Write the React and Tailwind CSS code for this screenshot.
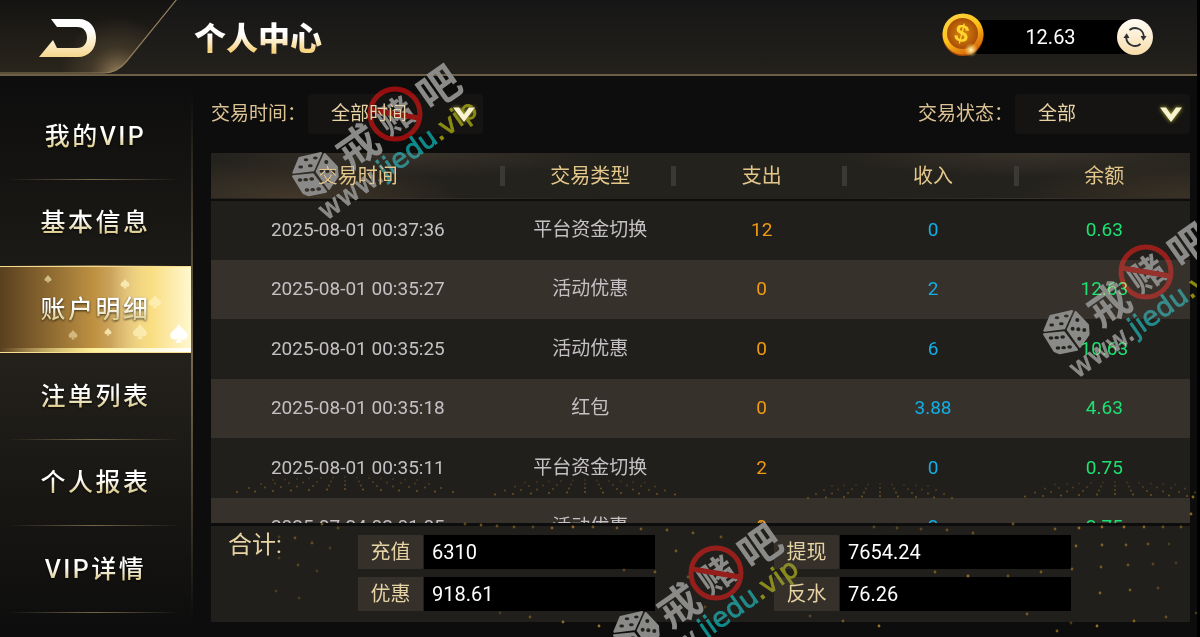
import { useState } from "react";
import { BsSuitSpadeFill } from "react-icons/bs";

const menu = ["我的VIP", "基本信息", "账户明细", "注单列表", "个人报表", "VIP详情"];

const rows = [
  { time: "2025-08-01 00:37:36", type: "平台资金切换", out: "12", income: "0", balance: "0.63" },
  { time: "2025-08-01 00:35:27", type: "活动优惠", out: "0", income: "2", balance: "12.63" },
  { time: "2025-08-01 00:35:25", type: "活动优惠", out: "0", income: "6", balance: "10.63" },
  { time: "2025-08-01 00:35:18", type: "红包", out: "0", income: "3.88", balance: "4.63" },
  { time: "2025-08-01 00:35:11", type: "平台资金切换", out: "2", income: "0", balance: "0.75" },
  { time: "2025-07-24 02:01:05", type: "活动优惠", out: "0", income: "2", balance: "2.75" },
];

function BackPanel() {
  return (
    <svg className="h-full w-full" viewBox="0 0 180 76" aria-hidden="true">
      <defs>
        <linearGradient id="panel" x1="0" y1="0" x2="0" y2="1">
          <stop offset="0" stopColor="#141312" />
          <stop offset="1" stopColor="#2a251c" />
        </linearGradient>
        <radialGradient id="panelGlow" cx="118" cy="76" r="58" gradientUnits="userSpaceOnUse">
          <stop offset="0" stopColor="#b09468" stopOpacity="0.85" />
          <stop offset="0.5" stopColor="#6b5a3e" stopOpacity="0.35" />
          <stop offset="1" stopColor="#6b5a3e" stopOpacity="0" />
        </radialGradient>
        <linearGradient id="arrow" x1="0" y1="0" x2="0" y2="1">
          <stop offset="0.3" stopColor="#ffffff" />
          <stop offset="1" stopColor="#f7d68c" />
        </linearGradient>
      </defs>
      <path d="M0 0H177L126 63Q117 74 103 74H0Z" fill="url(#panel)" />
      <path d="M0 0H177L126 63Q117 74 103 74H0Z" fill="url(#panelGlow)" />
      <path d="M177 0L126 63Q117 74 103 74H0" fill="none" stroke="#8f7c5a" strokeWidth="1.2" />
      <path
        d="M51 20H79C89 20 96 28 96 38.500C96 50 89 58 78 58H39L53 41L57 49H77C84 49 87 44 87 38.500C87 33 84 28 77 28H57Z"
        fill="url(#arrow)"
      />
    </svg>
  );
}

function Coin() {
  return (
    <svg className="relative mb-1 h-[44px] w-[42px] shrink-0" viewBox="0 0 42 44" aria-hidden="true">
      <defs>
        <linearGradient id="rim" x1="0" y1="0" x2="0.6" y2="1">
          <stop offset="0" stopColor="#ffd84a" />
          <stop offset="0.55" stopColor="#fcc419" />
          <stop offset="1" stopColor="#d9680b" />
        </linearGradient>
        <radialGradient id="face">
          <stop offset="0" stopColor="#d98a12" />
          <stop offset="1" stopColor="#a94e06" />
        </radialGradient>
        <radialGradient id="shine">
          <stop offset="0" stopColor="#fff8d0" />
          <stop offset="1" stopColor="#ffd84a" stopOpacity="0" />
        </radialGradient>
      </defs>
      <circle cx="21" cy="22.500" r="20.500" fill="#a8480a" />
      <circle cx="21" cy="21" r="20.500" fill="url(#rim)" />
      <circle cx="20.500" cy="20.500" r="15.500" fill="url(#face)" />
      <text
        x="20"
        y="29"
        textAnchor="middle"
        fontFamily="Liberation Sans, sans-serif"
        fontSize="25"
        fontWeight="700"
        fill="#ffd52e"
        transform="rotate(14 20 20)"
      >
        $
      </text>
      <circle cx="29" cy="37" r="7" fill="url(#shine)" />
    </svg>
  );
}

function RefreshIcon() {
  return (
    <svg className="h-[24px] w-[24px]" viewBox="0 0 26 26" aria-hidden="true">
      <g fill="none" stroke="#2a3033" strokeWidth="2">
        <path d="M7 5.500A9.500 9.500 0 0 1 22.500 12" />
        <path d="M19 20.500A9.500 9.500 0 0 1 3.500 14" />
      </g>
      <path d="M19 12H25.500L22 17Z" fill="#2a3033" />
      <path d="M0.500 14H7L4 9Z" fill="#2a3033" />
    </svg>
  );
}

function Arrow() {
  return (
    <svg
      className="pointer-events-none absolute top-3 right-[7px] h-[17px] w-[24px] drop-shadow-[0_0_2px_#c6c234]"
      viewBox="0 0 24 17"
      aria-hidden="true"
    >
      <path d="M1 1.500H7L12 8.500L17 1.500H23L12 16Z" fill="#f8f4d2" />
    </svg>
  );
}

function Filter({ id, label, options }) {
  const [value, setValue] = useState(options[0]);
  return (
    <div className="flex items-center gap-0.5">
      <label htmlFor={id} className="text-[19px] text-[#dcc394]">
        {label}：
      </label>
      <div className="relative h-10 w-[175px] rounded bg-[#151412]">
        <select
          id={id}
          value={value}
          onChange={(e) => setValue(e.target.value)}
          className="h-full w-full appearance-none bg-transparent pl-[23px] text-[19px] text-[#e8d3a6]"
        >
          {options.map((o) => (
            <option key={o}>{o}</option>
          ))}
        </select>
        <Arrow />
      </div>
    </div>
  );
}

function Total({ id, label, value }) {
  return (
    <div className="flex h-[34px] w-[297px] gap-px">
      <label
        htmlFor={id}
        className="flex w-[65px] items-center justify-center bg-[#35302a] text-[20px] text-[#e6d3a4]"
      >
        {label}
      </label>
      <input id={id} readOnly value={value} className="min-w-0 flex-1 bg-black px-2 text-[20px] text-white" />
    </div>
  );
}

// gold dust: [x, y, strength]
const dust = [
  [279, 537, 3], [295, 538, 5], [312, 543, 5], [330, 548, 3], [279, 558, 3], [298, 565, 4],
  [317, 571, 3], [276, 591, 3], [299, 598, 3], [322, 524, 6], [338, 528, 4], [465, 524, 5],
  [481, 525, 6], [497, 526, 5], [514, 527, 5], [533, 527, 4], [552, 528, 7], [573, 527, 8],
  [593, 527, 6], [617, 528, 6], [641, 529, 6], [667, 530, 6], [693, 533, 6], [721, 537, 5],
  [676, 551, 6], [624, 570, 4], [655, 572, 6], [688, 577, 5], [705, 607, 4], [761, 522, 9],
  [599, 626, 9], [563, 622, 8], [530, 617, 5], [500, 613, 3], [810, 616, 4], [843, 621, 6],
  [874, 527, 4], [897, 528, 4], [921, 529, 4], [947, 530, 5], [973, 533, 5], [1013, 524, 6],
  [1055, 529, 6], [1079, 528, 8], [1102, 527, 8], [1124, 527, 8], [1144, 527, 7], [1163, 527, 5],
  [1181, 527, 5], [1076, 546, 7], [1102, 545, 7], [1126, 545, 6], [1148, 544, 5], [1169, 544, 3],
  [1072, 569, 6], [1101, 567, 6], [1128, 565, 5], [1153, 564, 4], [1176, 563, 3], [935, 572, 6],
  [968, 576, 8], [1008, 576, 5], [1041, 572, 6], [1100, 593, 7], [1130, 590, 6], [1158, 588, 4],
  [1027, 614, 6], [1071, 623, 4], [1134, 621, 7], [1166, 617, 5], [1097, 626, 9], [1057, 631, 7],
  [879, 626, 9], [1193, 497, 8], [1191, 514, 8], [1196, 613, 4],
];

// fan-shaped bursts above the totals: centre x, top y, dots per ring, gap
const fans = [
  [345, 477, 13, 12],
  [585, 480, 11, 12],
  [880, 484, 9, 12],
  [1115, 482, 11, 12],
];

function Dust() {
  return (
    <svg
      className="pointer-events-none absolute bottom-0 left-0 h-[180px] w-[1200px]"
      viewBox="0 457 1200 180"
      aria-hidden="true"
    >
      {fans.map(([cx, top, n, gap]) =>
        [0, 1, 2, 3].map((ring) =>
          Array.from({ length: n }, (_, i) => {
            const k = i - (n - 1) / 2;
            return (
              <circle
                key={`${cx}-${ring}-${i}`}
                cx={cx + k * (gap + ring * 2)}
                cy={top + ring * 4 + Math.abs(k) / 2}
                r="1.100"
                fill="#c08a28"
                opacity={0.18 + ring * 0.09}
              />
            );
          })
        )
      )}
      {dust.map(([x, y, s]) => (
        <circle key={`${x}-${y}`} cx={x} cy={y} r="1.400" fill="#c9922e" opacity={s / 12} />
      ))}
    </svg>
  );
}

function Watermark({ className }) {
  return (
    <svg
      className={`pointer-events-none absolute h-[180px] w-[200px] mix-blend-lighten ${className}`}
      viewBox="0 0 200 180"
      aria-hidden="true"
    >
      <g transform="translate(24 120) scale(0.333) translate(-195 -393)">
        <g fill="#8a8a88" stroke="#8a8a88" strokeWidth="6" strokeLinejoin="round">
          <path d="M148 345L213 330L190 382L130 389Z" />
          <path d="M224 333L261 372L263 400L237 438L200 386Z" />
          <path d="M129 400L189 394L228 446L176 457L160 450Z" />
        </g>
        <g fill="#25231f">
          <ellipse cx="168" cy="350" rx="7" ry="4.500" />
          <ellipse cx="196" cy="345" rx="7" ry="4.500" />
          <ellipse cx="152" cy="372" rx="7" ry="4.500" />
          <ellipse cx="181" cy="368" rx="7" ry="4.500" />
          <circle cx="229" cy="357" r="6" />
          <circle cx="215" cy="383" r="6" />
          <circle cx="232" cy="385" r="6" />
          <circle cx="250" cy="387" r="6" />
          <circle cx="235" cy="413" r="6" />
          <ellipse cx="150" cy="411" rx="7" ry="5" />
          <ellipse cx="167" cy="410" rx="7" ry="5" />
          <ellipse cx="185" cy="408" rx="7" ry="5" />
          <ellipse cx="171" cy="441" rx="7" ry="5" />
          <ellipse cx="188" cy="440" rx="7" ry="5" />
          <ellipse cx="206" cy="438" rx="7" ry="5" />
        </g>
      </g>
      <g
        fontFamily="Noto Sans CJK SC, sans-serif"
        fontWeight="700"
        fill="#8a8a88"
        textAnchor="middle"
      >
        <text transform="translate(67 93) rotate(-35)" y="15" fontSize="42">戒</text>
        <text transform="translate(105 62) rotate(-35)" y="13" fontSize="36">赌</text>
        <text transform="translate(148 34) rotate(-35)" y="15" fontSize="42">吧</text>
      </g>
      <g fill="none" stroke="#960c0d" strokeWidth="5">
        <circle cx="104" cy="60" r="25" />
        <path d="M80 56L128 64" />
      </g>
      <text
        transform="translate(35 167) rotate(-35)"
        fontFamily="DejaVu Sans, sans-serif"
        fontSize="27"
        strokeWidth="0.8"
      >
        <tspan fill="#8a8a88" stroke="#8a8a88">www.</tspan>
        <tspan fill="#0a8c8c" stroke="#0a8c8c">jiedu</tspan>
        <tspan fill="#8c8c0a" stroke="#8c8c0a">.vip</tspan>
      </text>
    </svg>
  );
}

function MenuItem({ label, active, onClick }) {
  return (
    <li className="relative flex-1">
      <button
        onClick={onClick}
        className={
          active
            ? "relative h-full w-[191px] border-y border-[#f6dc8c] bg-linear-to-r from-[#5a401f] via-[#c09343] via-50% to-[#fff8cf] text-[25px] font-medium tracking-widest"
            : "h-full w-[191px] text-[25px] font-medium tracking-widest"
        }
      >
        {active && (
          <span className="text-[#fff3c0]">
            <span className="absolute inset-y-0 right-0 w-20 bg-linear-to-r from-transparent via-[#f9dd80] to-[#fff8cf]" />
            <span className="absolute inset-x-0 bottom-0 h-1 bg-linear-to-r from-transparent via-[#fff19a] to-white" />
            <BsSuitSpadeFill className="absolute top-2 left-11 h-2 w-2 opacity-60" />
            <BsSuitSpadeFill className="absolute top-3 left-30 h-2.5 w-2.5 opacity-80" />
            <BsSuitSpadeFill className="absolute top-7 left-37 h-3.5 w-3.5 opacity-70" />
            <BsSuitSpadeFill className="absolute bottom-3 left-17 h-2.5 w-2.5 opacity-50" />
            <BsSuitSpadeFill className="absolute bottom-4 left-26 h-2 w-2 opacity-80" />
            <BsSuitSpadeFill className="absolute bottom-3 left-33 h-4 w-4 opacity-70" />
            <BsSuitSpadeFill className="absolute right-0.5 bottom-2 h-5 w-5 text-white" />
          </span>
        )}
        <span className="relative bg-linear-to-b from-white from-40% to-[#dccb8c] to-85% bg-clip-text text-transparent drop-shadow-[0_1px_1px_rgba(0,0,0,0.7)]">
          {label}
        </span>
      </button>
      {!active && (
        <span className="absolute bottom-0 left-2 h-px w-[172px] bg-linear-to-r from-transparent via-[#75684a] to-transparent" />
      )}
    </li>
  );
}

export default function App() {
  const [current, setCurrent] = useState(2);

  return (
    <div className="relative flex h-screen flex-col overflow-hidden border-r-[3px] border-black bg-[#0d0d0d] font-[Roboto,'Noto_Sans_CJK_SC',sans-serif]">
      <header className="flex h-[76px] shrink-0 items-center border-b-2 border-[#6d5f45] bg-linear-to-b from-[#161616] to-[#24211c]">
        <button aria-label="返回" className="h-[76px] w-[180px] shrink-0">
          <BackPanel />
        </button>
        <h1 className="ml-[14px] pt-1 bg-linear-to-b from-white from-45% to-[#f8d580] to-75% bg-clip-text text-[32px] font-black text-transparent">
          个人中心
        </h1>
        <div className="mr-11 ml-auto flex w-[211px] items-center">
          <Coin />
          <div className="-mx-3 h-[34px] flex-1 bg-black text-center text-[20px] leading-[34px] text-white">
            12.63
          </div>
          <button
            aria-label="刷新"
            className="relative flex h-9 w-9 shrink-0 items-center justify-center rounded-full bg-linear-to-b from-[#fffdf6] to-[#f9dcaa]"
          >
            <RefreshIcon />
          </button>
        </div>
      </header>

      <div className="flex min-h-0 flex-1">
        <nav className="relative w-[193px] shrink-0 bg-linear-to-b from-[#0d0d0d] via-[#24211b] to-[#0d0d0d]">
          <ul className="flex h-full flex-col pt-[17px] pb-6">
            {menu.map((m, i) => (
              <MenuItem key={m} label={m} active={i === current} onClick={() => setCurrent(i)} />
            ))}
          </ul>
          <span className="absolute inset-y-5 right-0 w-0.5 bg-linear-to-b from-transparent via-[#75684a] to-transparent" />
        </nav>

        <main className="flex min-w-0 flex-1 flex-col pt-[18px] pr-[7px] pb-[15px] pl-[18px]">
          <div className="flex justify-between">
            <Filter id="time" label="交易时间" options={["全部时间", "今天", "昨天"]} />
            <Filter id="status" label="交易状态" options={["全部", "支出", "收入"]} />
          </div>

          <div className="mt-[19px] min-h-0 flex-1 overflow-hidden">
            <table className="w-full table-fixed border-collapse text-center text-[19px]">
              <thead>
                <tr className="h-[47px] border-b-2 border-[#0f0e0d] bg-[#24221d] bg-[radial-gradient(ellipse_170px_40px_at_8%_100%,#43382a,transparent),radial-gradient(ellipse_170px_40px_at_100%_100%,#3a3226,transparent),radial-gradient(ellipse_200px_24px_at_20%_0%,#38322a,transparent),radial-gradient(ellipse_200px_24px_at_84%_0%,#38322a,transparent)] text-[20px] text-[#e3c68a]">
                  {["交易时间", "交易类型", "支出", "收入", "余额"].map((h, i) => (
                    <th key={h} className={i === 0 ? "w-[30%] p-0 font-normal" : "p-0 font-normal"}>
                      <div className="flex items-center">
                        <span className="flex-1">{h}</span>
                        {i < 4 && <span className="-ml-[5px] h-5 w-[5px] bg-[#3a3935]" />}
                      </div>
                    </th>
                  ))}
                </tr>
              </thead>
              <tbody>
                {rows.map((r) => (
                  <tr key={r.time} className="h-[59px] bg-[#211f1b] text-[#c4c0c4] odd:h-[60px] even:bg-[#37312b]">
                    <td className="p-0">{r.time}</td>
                    <td className="p-0">{r.type}</td>
                    <td className="p-0 text-[#f09a10]">{r.out}</td>
                    <td className="p-0 text-[#12aee6]">{r.income}</td>
                    <td className="p-0 text-[#1be272]">{r.balance}</td>
                  </tr>
                ))}
              </tbody>
            </table>
          </div>

          <section className="mt-[3px] flex h-[96px] shrink-0 bg-[#211f1b] pt-[9px] pl-[17px]">
            <h2 className="w-[130px] text-[24px] leading-5 text-[#e6d3a4]">合计:</h2>
            <div className="grid auto-rows-min grid-cols-[297px_297px] gap-x-[119px] gap-y-2">
              <Total id="recharge" label="充值" value="6310" />
              <Total id="withdraw" label="提现" value="7654.24" />
              <Total id="bonus" label="优惠" value="918.61" />
              <Total id="rebate" label="反水" value="76.26" />
            </div>
          </section>
        </main>
      </div>

      <Dust />
      <Watermark className="top-[54px] left-[291px]" />
      <Watermark className="top-[212px] left-[1042px]" />
      <Watermark className="top-[513px] left-[612px]" />
    </div>
  );
}
